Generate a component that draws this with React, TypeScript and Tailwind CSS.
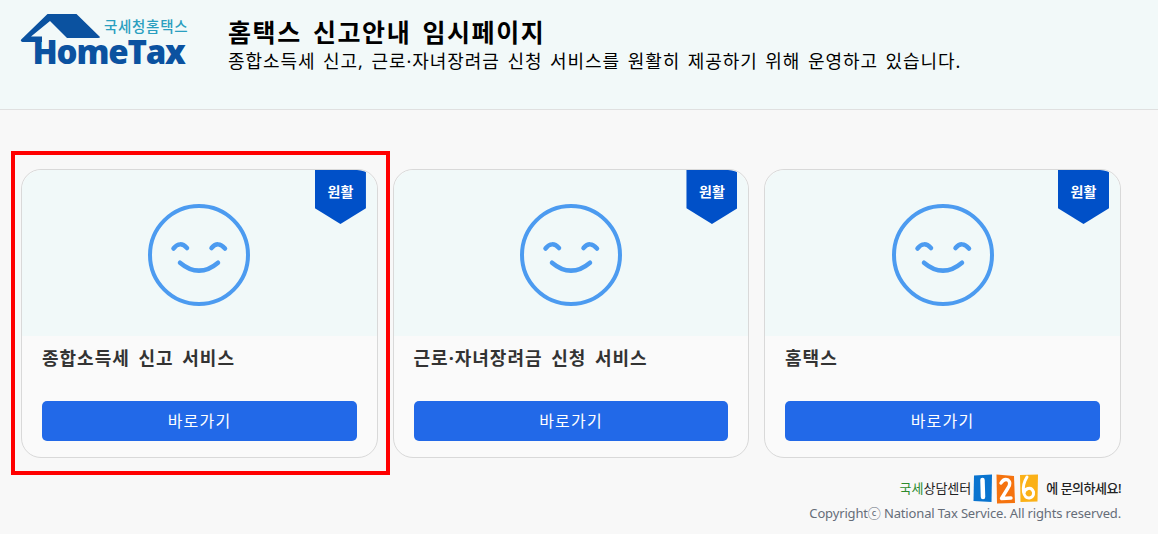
const FONT = "font-['Noto_Sans','Noto_Sans_CJK_KR',sans-serif]";

const SERVICES = [
  { title: "종합소득세 신고 서비스", highlighted: true },
  { title: "근로·자녀장려금 신청 서비스", highlighted: false },
  { title: "홈택스", highlighted: false },
];

function Logo() {
  return (
    <svg width="172" height="62" viewBox="0 0 172 62" className="mt-[13px] ml-[20px] shrink-0">
      <path
        d="M1.2 26.5L27.5 1H56.5L80 24Q80 25 78 25H47L30 8L11 23.5H22V29H2.5Q0 28 1.2 26.5Z"
        fill="#0b52a0"
      />
      <text x="12.5" y="51" fontFamily="Open Sans" fontWeight="800" fontSize="33" letterSpacing="-1.2" fill="#0b52a0">
        HomeTax
      </text>
      <text x="84" y="19" fontFamily="Noto Sans CJK KR" fontWeight="500" fontSize="14.5" letterSpacing="0.7" fill="#2a9fc0">
        국세청홈택스
      </text>
    </svg>
  );
}

function Smile() {
  return (
    <svg width="102" height="102" viewBox="0 0 102 102" fill="none" stroke="#4c9bf0" strokeWidth="4" strokeLinecap="round">
      <circle cx="51" cy="51" r="49" />
      <path d="M32 58.7Q51 74.7 70 58.7" strokeWidth="4.5" />
      <path d="M25.5 44.5Q32 36.5 39 44" strokeWidth="4.5" />
      <path d="M63.5 44Q70 36.5 77 44.5" strokeWidth="4.5" />
    </svg>
  );
}

function ServiceCard({ title, highlighted }: { title: string; highlighted: boolean }) {
  return (
    <div className="relative flex h-[289px] flex-1 flex-col rounded-[20px] border border-[#d9d9d9] bg-[#fafafa]">
      <div className="relative flex h-[166px] items-center justify-center overflow-hidden rounded-t-[20px] bg-[#f1f9f9]">
        <div className="pt-[4px]">
          <Smile />
        </div>
        <div className="absolute top-0 right-[11px] flex h-[54px] w-[51px] justify-center bg-[#0050c8] pt-[11px] text-[14px] font-bold text-white [clip-path:polygon(0_0,100%_0,100%_71%,50%_100%,0_71%)]">
          원활
        </div>
      </div>
      <div className="flex flex-1 flex-col px-[20px]">
        <h3 className="mt-[7px] text-[18px] leading-[30px] font-bold tracking-[1px] [word-spacing:3px] text-[#333333]">{title}</h3>
        <button className="mt-auto mb-[16px] h-[40px] w-full rounded-[5px] bg-[#2269e8] text-[16px] tracking-[1.2px] text-white">
          바로가기
        </button>
      </div>
      {highlighted && (
        <div className="pointer-events-none absolute top-[-19px] right-[-13px] bottom-[-18px] left-[-11px] border-[4px] border-[#ff0000]" />
      )}
    </div>
  );
}

function Badge126() {
  return (
    <svg width="66" height="30" viewBox="0 0 66 30" className="shrink-0">
      <path d="M1 1.5L19 0.5L18.5 28L0.5 27Z" fill="#0a74cf" />
      <path d="M9.5 6L10 23" stroke="#ffffff" strokeWidth="4.5" strokeLinecap="round" />
      <path d="M23.5 0.5L41 2L42 29L24 29.5Z" fill="#f5730f" />
      <path d="M28 9Q31 4 35 6Q38.5 9 35 14L28.5 24.5L38 24" fill="none" stroke="#ffffff" strokeWidth="3.4" strokeLinejoin="round" strokeLinecap="round" />
      <path d="M47 1L65 0.5L64.5 27.5L47.5 28Z" fill="#fbb117" />
      <path d="M54 3Q49.5 10 50.5 18Q52 24.5 56.5 24Q61 23 60.5 18Q59 13.5 55 14.5Q51.5 15.5 51 19" fill="none" stroke="#ffffff" strokeWidth="3" strokeLinecap="round" />
    </svg>
  );
}

export default function App() {
  return (
    <div className={`${FONT} h-[534px] overflow-hidden bg-[#f8f8f8]`}>
      <header className="flex h-[110px] border-b border-[#e0e0e0] bg-[#f2f9f9]">
        <Logo />
        <div className="mt-[17px] ml-[36px] text-black">
          <h1 className="text-[25px] leading-[31px] font-bold tracking-[1.6px] [word-spacing:3px]">홈택스 신고안내 임시페이지</h1>
          <p className="text-[18px] leading-[26px] tracking-[0.94px] [word-spacing:2px]">
            종합소득세 신고, 근로·자녀장려금 신청 서비스를 원활히 제공하기 위해 운영하고 있습니다.
          </p>
        </div>
      </header>
      <main className="flex gap-[14.6px] pt-[59px] pr-[37px] pl-[21px]">
        {SERVICES.map((service) => (
          <ServiceCard key={service.title} title={service.title} highlighted={service.highlighted} />
        ))}
      </main>
      <footer className="flex flex-col items-end pt-[15px] pr-[37px]">
        <div className="flex h-[32px] items-center">
          <span className="text-[13px] tracking-[0px]">
            <span className="text-[#2e8b2e]">국세</span>
            <span className="text-[#222222]">상담센터</span>
          </span>
          <span className="mr-[7px] ml-[2px]">
            <Badge126 />
          </span>
          <span className="text-[13px] font-medium tracking-[-0.5px] text-[#222222]">에 문의하세요!</span>
        </div>
        <p className="mt-[-1px] text-[13px] leading-[18px] tracking-[-0.15px] text-[#666d78]">
          Copyrightⓒ National Tax Service. All rights reserved.
        </p>
      </footer>
    </div>
  );
}
